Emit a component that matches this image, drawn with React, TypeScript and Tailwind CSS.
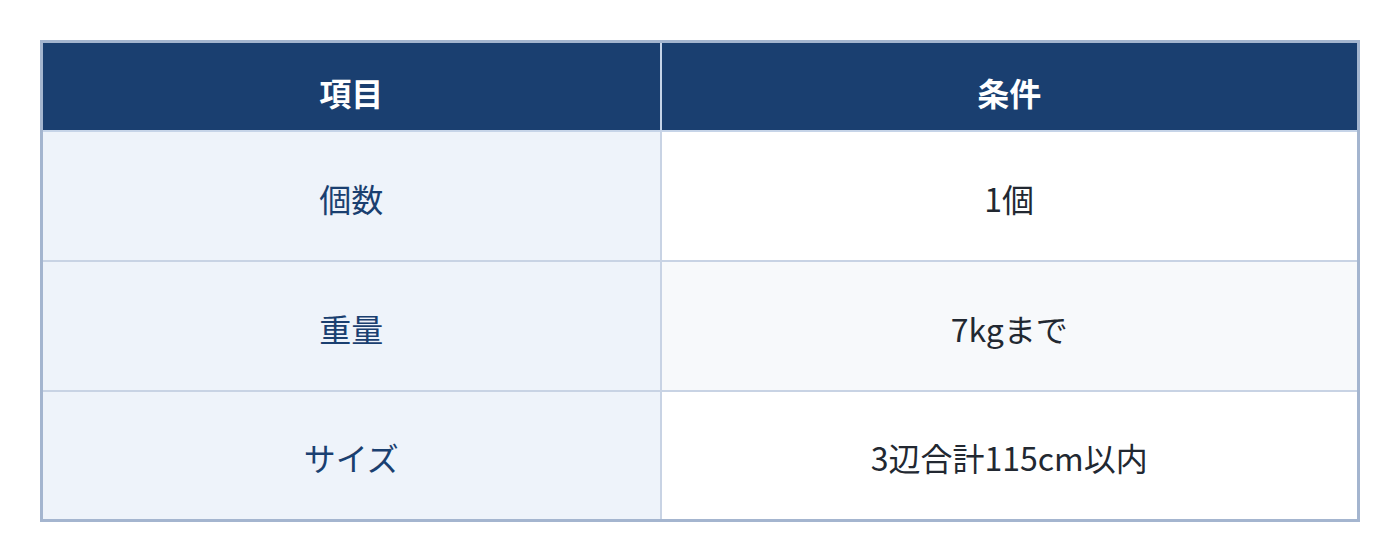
const rows = [
  { label: "個数", value: "1個", stripe: false },
  { label: "重量", value: "7kgまで", stripe: true },
  { label: "サイズ", value: "3辺合計115cm以内", stripe: false },
];

export default function App() {
  return (
    <div className="bg-white h-[560px] p-10 font-['Noto_Sans_CJK_JP','Noto_Sans',sans-serif]">
      <table className="w-full border-collapse border-[3px] border-[#a4b5cf] text-[32px] leading-[1.5]">
        <colgroup>
          <col className="w-[619px]" />
          <col />
        </colgroup>
        <thead>
          <tr className="h-[89px] bg-[#1a3f70] text-white">
            <th className="border-2 border-[#c6d4e8] pt-3 font-bold text-center">項目</th>
            <th className="border-2 border-[#c6d4e8] pt-3 font-bold text-center">条件</th>
          </tr>
        </thead>
        <tbody>
          {rows.map((row) => (
            <tr key={row.label} className="h-[130px]">
              <td className="border-2 border-[#c8d3e4] bg-[#eef3fa] pt-1 text-[#1a3f70] text-center">
                {row.label}
              </td>
              <td
                className={
                  row.stripe
                    ? "border-2 border-[#c8d3e4] bg-[#f7f9fb] pt-1 text-[#222831] text-center"
                    : "border-2 border-[#c8d3e4] bg-white pt-1 text-[#222831] text-center"
                }
              >
                {row.value}
              </td>
            </tr>
          ))}
        </tbody>
      </table>
    </div>
  );
}
